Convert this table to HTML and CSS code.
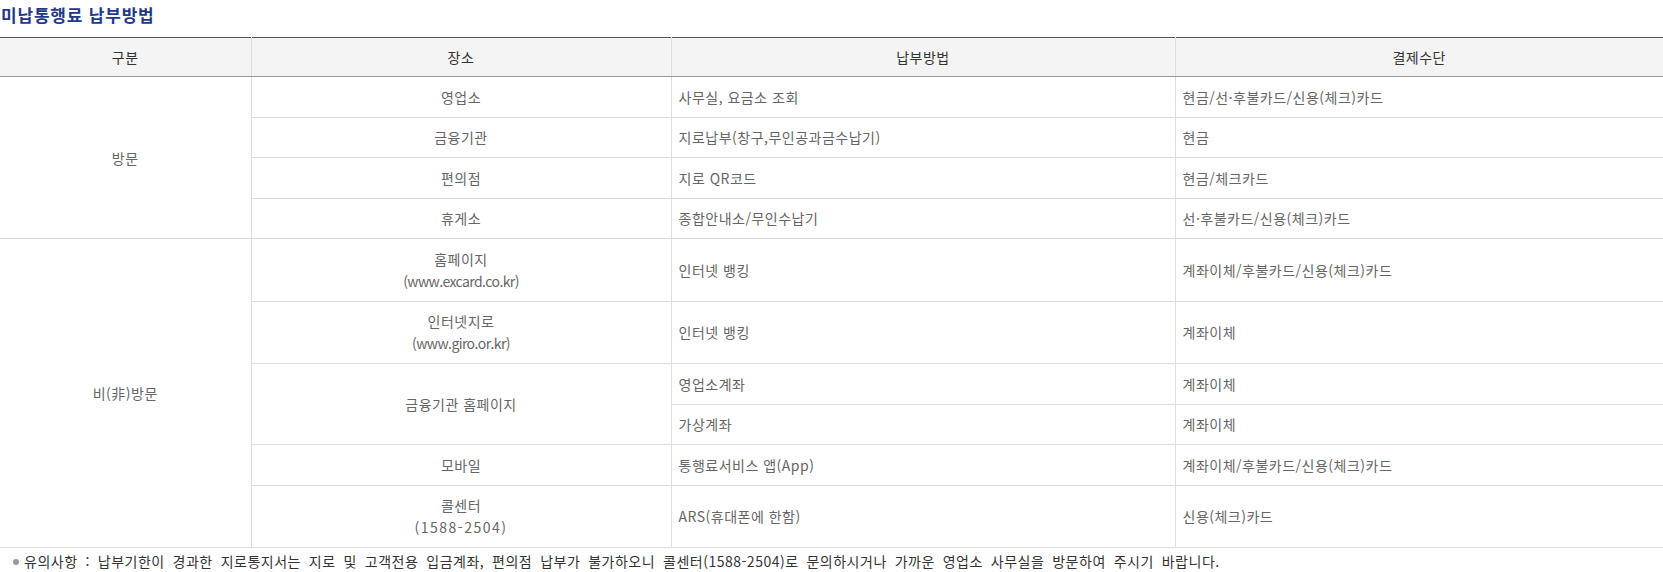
FILE: index.html
```html
<!DOCTYPE html>
<html lang="ko">
<head>
<meta charset="utf-8">
<link rel="stylesheet" href="styles.css">
</head>
<body>
<h3 class="title">미납통행료 납부방법</h3>
<table class="pay">
  <colgroup>
    <col class="c1"><col class="c2"><col class="c3"><col class="c4">
  </colgroup>
  <thead>
    <tr><th>구분</th><th>장소</th><th>납부방법</th><th>결제수단</th></tr>
  </thead>
  <tbody>
    <tr><td class="ctr" rowspan="4">방문</td><td class="ctr">영업소</td><td>사무실, 요금소 조회</td><td>현금/선·후불카드/신용(체크)카드</td></tr>
    <tr><td class="ctr">금융기관</td><td>지로납부(창구,무인공과금수납기)</td><td>현금</td></tr>
    <tr><td class="ctr">편의점</td><td>지로 QR코드</td><td>현금/체크카드</td></tr>
    <tr><td class="ctr">휴게소</td><td>종합안내소/무인수납기</td><td>선·후불카드/신용(체크)카드</td></tr>
    <tr><td class="ctr" rowspan="6">비(非)방문</td><td class="ctr">홈페이지<br><span class="url">(www.excard.co.kr)</span></td><td>인터넷 뱅킹</td><td>계좌이체/후불카드/신용(체크)카드</td></tr>
    <tr><td class="ctr">인터넷지로<br><span class="url">(www.giro.or.kr)</span></td><td>인터넷 뱅킹</td><td>계좌이체</td></tr>
    <tr><td class="ctr" rowspan="2">금융기관 홈페이지</td><td>영업소계좌</td><td>계좌이체</td></tr>
    <tr><td>가상계좌</td><td>계좌이체</td></tr>
    <tr><td class="ctr">모바일</td><td>통행료서비스 앱(App)</td><td>계좌이체/후불카드/신용(체크)카드</td></tr>
    <tr><td class="ctr">콜센터<br><span class="num">(1588-2504)</span></td><td>ARS(휴대폰에 한함)</td><td>신용(체크)카드</td></tr>
  </tbody>
</table>
<p class="note"><span class="dot"></span>유의사항 : 납부기한이 경과한 지로통지서는 지로 및 고객전용 입금계좌, 편의점 납부가 불가하오니 콜센터(1588-2504)로 문의하시거나 가까운 영업소 사무실을 방문하여 주시기 바랍니다.</p>
</body>
</html>
```

FILE: styles.css
```css
html, body {
  margin: 0;
  padding: 0;
  background: #fff;
}
body {
  font-family: "Noto Sans CJK KR", "Noto Sans", sans-serif;
  font-size: 14px;
  width: 1663px;
}
.title {
  margin: 0;
  padding: 5px 0 12px 1px;
  font-size: 17px;
  line-height: 20px;
  letter-spacing: 0.8px;
  font-weight: bold;
  color: #1f3a8c;
}
.pay {
  width: 1663px;
  border-collapse: collapse;
  table-layout: fixed;
  border-top: 1px solid #555;
  letter-spacing: 0.5px;
}
.c1 { width: 251px; }
.c2 { width: 420px; }
.c3 { width: 504px; }
.c4 { width: 488px; }
.pay th {
  background: #f4f4f4;
  color: #333;
  font-weight: normal;
  height: 38px;
  padding: 0;
  line-height: 20px;
  text-align: center;
  border-left: 1px solid #ddd;
  border-right: 1px solid #ddd;
  border-bottom: 1px solid #999;
}
.pay td {
  border: 1px solid #ddd;
  color: #666;
  line-height: 22px;
  padding: 8.75px 7px;
  text-align: left;
  vertical-align: middle;
}
.pay td.ctr {
  text-align: center;
}
.pay tr > :first-child { border-left: 0; }
.pay tr > :last-child { border-right: 0; }
.url {
  letter-spacing: -0.6px;
}
.num {
  letter-spacing: 1.5px;
}
.note {
  margin: 0;
  padding: 1px 0 0 13px;
  line-height: 24px;
  color: #333;
  letter-spacing: 0.5px;
  word-spacing: 3.5px;
}
.dot {
  display: inline-block;
  width: 6px;
  height: 6px;
  border-radius: 50%;
  background: #999;
  margin-right: 5px;
  vertical-align: 2px;
}
```
